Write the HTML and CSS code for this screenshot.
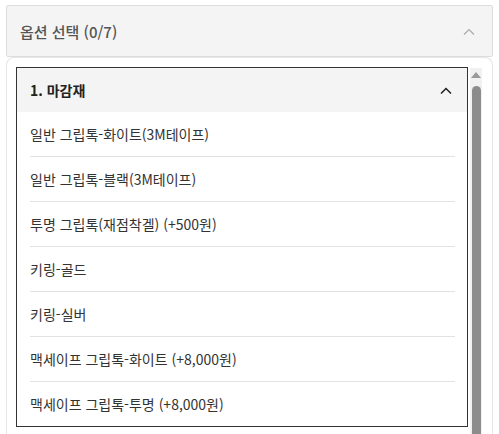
FILE: index.html
```html
<!DOCTYPE html>
<html lang="ko">
<head>
    <meta charset="UTF-8">
    <meta name="viewport" content="width=device-width, initial-scale=1.0">
    <title>옵션 선택</title>
    <link rel="stylesheet" href="styles.css">
</head>
<body>
    <div class="wrap">
        <div class="opt-head">
            <span class="opt-title">옵션 선택 (0/7)</span>
            <svg class="chev-light" width="12" height="7" viewBox="0 0 12 7"><path d="M1 6.5L6 1.5L11 6.5" fill="none" stroke="#aaa" stroke-width="1.2"/></svg>
        </div>
        <div class="panel">
            <div class="list">
                <div class="list-head">
                    <span>1. 마감재</span>
                    <svg width="12" height="7" viewBox="0 0 12 7"><path d="M1 6.5L6 1.5L11 6.5" fill="none" stroke="#222" stroke-width="1.5"/></svg>
                </div>
                <div class="item">일반 그립톡-화이트(3M테이프)</div>
                <div class="item">일반 그립톡-블랙(3M테이프)</div>
                <div class="item">투명 그립톡(재점착겔) (+500원)</div>
                <div class="item">키링-골드</div>
                <div class="item">키링-실버</div>
                <div class="item">맥세이프 그립톡-화이트 (+8,000원)</div>
                <div class="item">맥세이프 그립톡-투명 (+8,000원)</div>
            </div>
            <div class="scroll">
                <div class="scroll-up"></div>
                <div class="scroll-thumb"></div>
            </div>
        </div>
    </div>
</body>
</html>
```

FILE: styles.css
```css
body{
    margin: 0;
    background-color: #fff;
    font-family: "Noto Sans CJK KR", "Noto Sans", sans-serif;
    color: #333;
}
.wrap{
    padding: 5px 6px 0 6px;
}
.opt-head{
    box-sizing: border-box;
    height: 52px;
    display: flex;
    align-items: center;
    justify-content: space-between;
    padding: 0 17px 0 13px;
    background-color: #f4f4f4;
    border: 1px solid #ddd;
    border-radius: 2px;
}
.opt-title{
    font-size: 15px;
    color: #555;
    font-weight: 500;
}
.panel{
    display: flex;
    padding: 9px 10px 0 9px;
    border: 1px solid #e6e6e6;
    border-bottom: none;
    border-radius: 8px 8px 0 0;
    height: 367px;
}
.list{
    width: 453px;
    height: 360px;
    box-sizing: border-box;
    border: 1px solid #333;
    overflow: hidden;
}
.list-head{
    height: 44px;
    display: flex;
    align-items: center;
    justify-content: space-between;
    padding: 0 15px 0 13px;
    background-color: #f4f4f4;
    font-size: 14px;
    font-weight: bold;
    color: #222;
}
.item{
    height: 44px;
    display: flex;
    align-items: center;
    margin: 0 12px 0 13px;
    border-bottom: 1px solid #e2e2e2;
    font-size: 14px;
    color: #333;
}
.scroll{
    width: 12px;
    margin-left: 2px;
    margin-top: 1px;
    background-color: #f1f1f1;
    display: flex;
    flex-direction: column;
    align-items: center;
}
.scroll-up{
    margin-top: 4px;
    width: 0;
    height: 0;
    border-left: 5px solid transparent;
    border-right: 5px solid transparent;
    border-bottom: 6px solid #999;
}
.scroll-thumb{
    margin-top: 8px;
    width: 9px;
    flex: 1;
    background-color: #8c8c8c;
    border-radius: 5px 5px 0 0;
}
```
